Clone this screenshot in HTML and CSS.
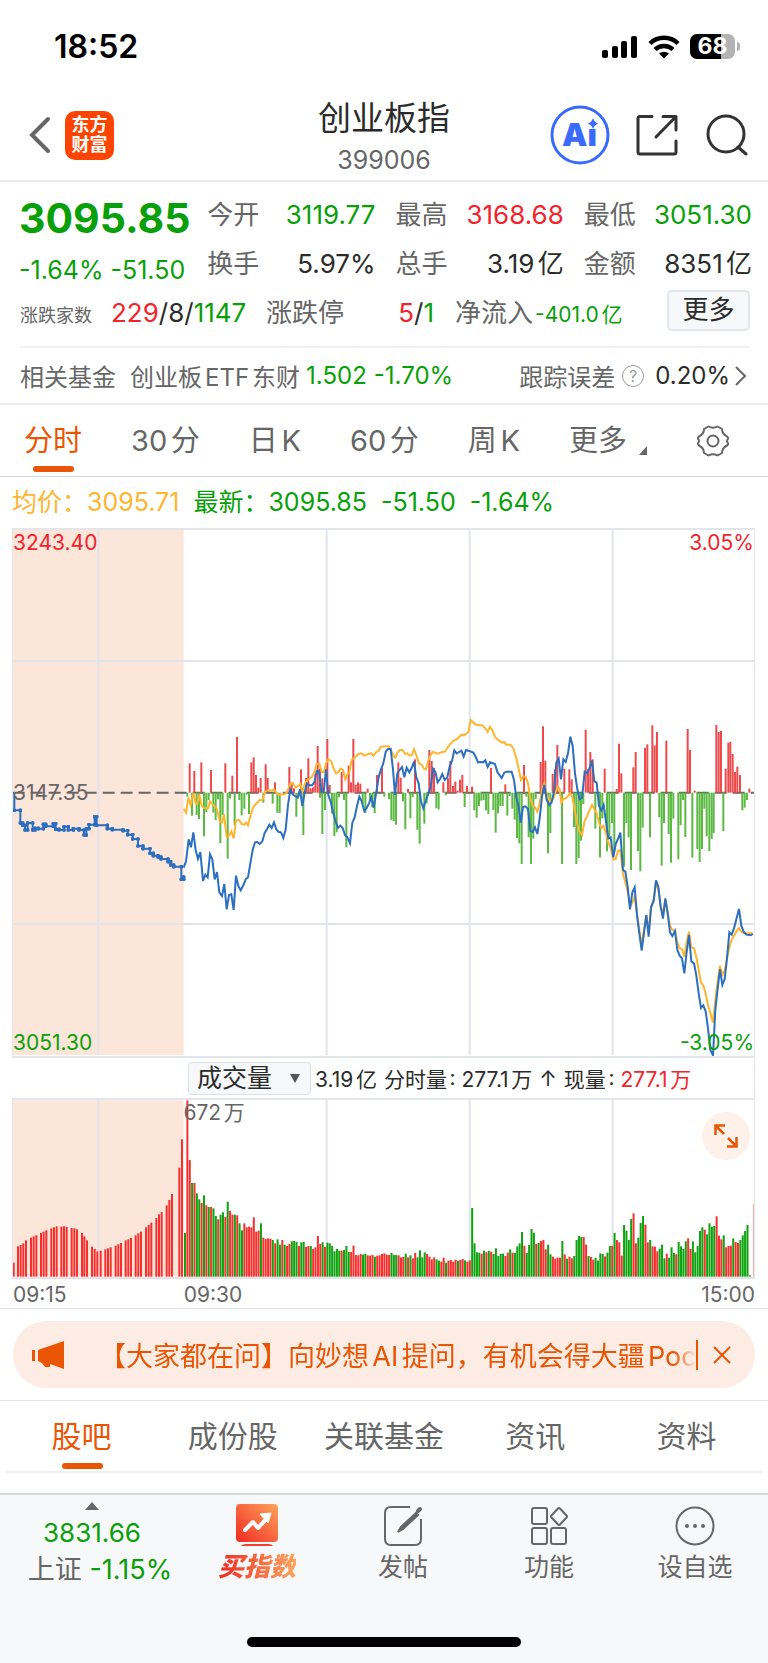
FILE: index.html
```html
<!DOCTYPE html>
<html lang="zh-CN">
<head>
<meta charset="utf-8">
<meta name="viewport" content="width=device-width, initial-scale=1">
<title>创业板指 399006</title>
<link rel="stylesheet" href="styles.css">
</head>
<body>
<div class="status">
  <span class="clock">18:52</span>
  <span class="status-icons">
    <svg width="36" height="24" viewBox="0 0 36 24"><rect x="0" y="15" width="6" height="8" rx="2"/><rect x="10" y="11" width="6" height="12" rx="2"/><rect x="19" y="6" width="6" height="17" rx="2"/><rect x="29" y="1" width="6" height="22" rx="2"/></svg>
    <svg width="32" height="24" viewBox="0 0 32 24"><g fill="none" stroke="#000" stroke-width="4.500"><path d="M2 8.500A20 20 0 0 1 30 8.500"/><path d="M7 14.500A13 13 0 0 1 25 14.500"/></g><path d="M16 23.500L11 18.600A7.500 7.500 0 0 1 21 18.600Z"/></svg>
    <span class="battery"><span>68</span></span>
  </span>
</div>

<header class="header">
  <div class="header-side">
    <button class="icon-btn back" aria-label="返回"><svg width="22" height="38" viewBox="0 0 22 38"><path d="M19 3L3 19L19 35" fill="none" stroke="#666" stroke-width="4" stroke-linecap="round"/></svg></button>
    <a class="logo" href="#"><span>东方</span><span>财富</span></a>
  </div>
  <div class="heading"><h1>创业板指</h1><p>399006</p></div>
  <div class="header-side header-actions">
    <button class="icon-btn" aria-label="智能助手"><svg width="60" height="60" viewBox="0 0 60 60"><circle cx="30" cy="30" r="28" fill="#fff" stroke="#3a6bff" stroke-width="3"/><text x="12" y="41" class="ai-text">Ai</text><path d="M36 12H48V24H36Z" fill="#fff"/><path d="M43 13Q44.500 17.500 48 18.500Q44.500 20 43 24Q41.500 20 38 18.500Q41.500 17.500 43 13Z" fill="#3a6bff"/></svg></button>
    <button class="icon-btn" aria-label="分享"><svg width="42" height="42" viewBox="0 0 42 42" fill="none" stroke="#333" stroke-width="3" stroke-linecap="round" stroke-linejoin="round"><path d="M16 2.500H4Q2 2.500 2 4.500V38Q2 40 4 40H38Q40 40 40 38V27"/><path d="M27 2.500H40V16M39 3.500L20 23"/></svg></button>
    <button class="icon-btn" aria-label="搜索"><svg width="42" height="42" viewBox="0 0 42 42" fill="none" stroke="#333" stroke-width="3" stroke-linecap="round"><circle cx="20" cy="20" r="18"/><path d="M32 33L40 40"/></svg></button>
  </div>
</header>

<main>
<section class="quote">
  <div class="quote-grid">
    <div class="price"><strong>3095.85</strong><span>-1.64% -51.50</span></div>
    <dl><dt>今开</dt><dd class="down">3119.77</dd></dl>
    <dl><dt>最高</dt><dd class="up">3168.68</dd></dl>
    <dl><dt>最低</dt><dd class="down">3051.30</dd></dl>
    <dl><dt>换手</dt><dd>5.97%</dd></dl>
    <dl><dt>总手</dt><dd>3.19亿</dd></dl>
    <dl><dt>金额</dt><dd>8351亿</dd></dl>
  </div>
  <div class="breadth">
    <span class="small-label">涨跌家数</span>
    <span class="counts"><b class="up">229</b>/8/<b class="down">1147</b></span>
    <span class="label">涨跌停</span>
    <span class="limits"><b class="up">5</b>/<b class="down">1</b></span>
    <span class="label">净流入</span><span class="inflow down">-401.0亿</span>
    <button class="more">更多</button>
  </div>
  <a class="related" href="#">
    <span>相关基金</span><span class="fund">创业板ETF东财</span><span class="down">1.502</span><span class="down fund-change">-1.70%</span>
    <span class="tracking">跟踪误差</span><span class="help">?</span><span class="dark">0.20%</span>
    <svg width="14" height="22" viewBox="0 0 14 22"><path d="M2 2L11 11L2 20" fill="none" stroke="#666" stroke-width="2"/></svg>
  </a>
</section>

<nav class="periods">
  <a class="active" href="#">分时</a><a href="#">30分</a><a href="#">日K</a><a href="#">60分</a><a href="#">周K</a>
  <a class="more-periods" href="#">更多<svg width="8" height="9" viewBox="0 0 8 9"><path d="M8 0V9H0Z" fill="#666"/></svg></a>
  <button class="icon-btn" aria-label="设置"><svg width="34" height="34" viewBox="0 0 34 34" fill="none" stroke="#666" stroke-width="2" stroke-linejoin="round"><path d="M12.500 2.500Q17 5 21.500 2.500L26 5Q26 10 31 12.500Q33 14 31.500 15.500Q30.500 17 31.500 18.500Q33 20 31 21.500Q26 24 26 29L21.500 31.500Q17 29 12.500 31.500L8 29Q8 24 3 21.500Q1 20 2.500 18.500Q3.500 17 2.500 15.500Q1 14 3 12.500Q8 10 8 5Z"/><circle cx="17" cy="17" r="5.500"/></svg></button>
</nav>

<section class="charts">
  <div class="legend"><span class="avg">均价：3095.71</span><span class="down">最新：3095.85</span><span class="down">-51.50</span><span class="down">-1.64%</span></div>

  <div class="price-chart">
    <svg class="plot" viewBox="3 6 2223 1578" preserveAspectRatio="none">
      <defs><marker id="dot" viewBox="0 0 10 10" refX="5" refY="5" markerWidth="12" markerHeight="12" markerUnits="userSpaceOnUse"><circle cx="5" cy="5" r="5" fill="#2c6fc0"/></marker></defs>
      <rect x="2" y="6" width="513" height="1575" fill="#fce5d9"/>
      <g class="grid"><path d="M0 399H2229M0 1188H2229M259 6V1581M944 6V1581M1373 6V1581M1802 6V1581"/></g>
      <path class="baseline" d="M2 794H2226"/>
      <g id="breadth-bars"></g>
      <g class="avg-line"><polyline points="515,843 522,854 529,809 536,831 544,795 551,826 556,828 562,799 569,834 579,841 589,841 594,820 602,829 614,841 624,881 630,884 636,859 644,926 651,924 658,910 665,931 672,877 682,877 689,888 697,890 702,884 708,892 716,861 724,837 732,828 743,816 751,816 760,791 769,786 779,788 786,784 794,796 804,801 819,798 826,791 834,768 842,765 851,778 859,774 865,768 871,791 879,766 886,756 899,748 907,732 914,708 922,706 929,732 936,732 942,706 949,693 957,699 964,719 972,736 979,732 986,722 993,726 1000,754 1007,738 1012,732 1019,696 1029,688 1039,678 1049,676 1057,683 1069,678 1078,676 1084,683 1092,673 1100,668 1106,657 1119,655 1130,655 1139,671 1149,691"/>
      <polyline transform="translate(1104 516)" points="45,175 52,158 60,150 68,150 75,162 82,160 88,166 95,166 102,148 110,168 117,190 125,194 132,206 138,208 145,182 152,165 159,156 173,161 187,156 195,155 203,142 212,131 221,122 230,118 245,104 252,106 260,100 266,94 272,60 280,68 288,74 307,76 315,84 323,96 330,80 337,90 345,111 352,118 365,128 372,126 379,134 392,134 400,145 409,175 416,207 423,240 430,229 437,231 444,250 451,295 458,318 465,322 472,335 479,310 486,268 493,250 500,285 510,304 520,295 527,275 534,260 539,268 544,308 550,298 560,293 571,279 577,290 584,330 592,373 599,396 606,405 614,362 621,349 628,332 636,315 643,328 650,340 657,368 664,384 671,378 678,400 685,428 692,445 700,478 707,477 714,453 721,450 729,522 736,546 743,575 750,620 757,608 764,590 771,640 778,690 785,735 792,690 799,645 806,695 813,622 821,602 828,548 835,568 842,620 849,640 856,598 863,635 870,677 877,690 885,692 892,728 899,745 906,748 913,770 920,726 927,695 934,742 942,745 949,771 956,810 963,848 970,858 977,880 984,915 991,940 999,968 1006,900 1013,845 1020,797 1027,825 1034,812 1041,775 1048,743 1055,718 1062,707 1069,695 1077,684 1084,695 1091,699 1119,700"/></g>
      <g class="price-line">
      <path transform="translate(-36 516)" marker-mid="url(#dot)" marker-end="url(#dot)" d="M43 280V331H61V369H68V376H75V390H83V369H98V390H105V385H115V386H130V373H137V379H160V371H167V388H177V390H192V380H205V390H220V386H237V390H252V405H259V386H267V374H284V350H290V376H322V386H337V389H369V392H383V404H398V417H414V438H429V446H450V460H460V467H474V471H483V477H504V485H512V495H521V500H544V538H551V531"/>
      <polyline transform="translate(-36 516)" points="551,503 558,484 566,418 573,442 580,397 587,450 594,477 601,456 609,543 616,524 623,532 630,463 637,478 644,538 651,516 658,577 666,588 673,552 680,628 687,585 694,583 701,630 708,527 715,558 722,571 730,556 737,538 744,532 752,484 758,450 765,427 772,426 779,432 787,424 794,399 801,387 808,374 815,384 822,367 829,388 836,396 843,397 850,414 857,388 864,315 871,268 878,283 885,288 893,293 900,268 907,318 914,277 921,251 929,256 936,256 943,247 950,214 957,214 964,273 971,275 978,208 985,285 992,305 999,335 1006,362 1014,384 1021,377 1028,384 1035,405 1042,412 1050,430 1057,368 1064,352 1071,318 1078,290 1085,304 1093,333 1100,324 1107,310 1114,292 1121,323 1128,282 1136,232 1143,208 1150,190 1157,156 1164,147 1172,147 1179,208 1185,285 1192,219"/>
      <polyline transform="translate(1104 516)" points="52,219 59,210 66,201 73,232 80,203 88,217 95,204 102,185 109,232 116,250 123,304 130,325 138,300 145,282 152,260 159,206 166,216 173,247 180,237 187,222 194,240 202,232 209,199 216,183 223,151 230,160 237,156 244,152 251,170 258,150 265,152 280,158 287,170 294,187 301,186 309,187 316,181 323,201 330,187 345,192 352,216 365,234 373,218 380,215 395,215 402,240 409,293 416,320 422,368 429,321 436,319 444,327 451,393 458,396 465,382 472,402 479,355 486,290 493,255 500,300 508,315 515,307 522,275 529,188 536,176 543,238 550,178 557,186 564,160 571,110 578,138 585,220 592,268 599,298 606,294 614,215 621,219 628,206 636,182 643,244 650,248 657,318 664,331 671,315 678,365 685,415 692,412 700,472 707,432 714,417 721,398 729,510 736,515 743,560 750,628 757,577 764,562 771,646 778,700 785,752 792,698 799,645 806,710 813,622 821,602 828,541 835,560 842,620 849,656 856,595 863,640 870,697 877,708 885,693 892,750 899,767 906,775 913,820 920,756 927,705 934,784 942,790 949,827 956,880 963,924 970,916 977,934 984,985 991,1050 999,1066 1006,930 1013,865 1020,808 1027,855 1034,837 1041,775 1048,697 1055,704 1062,685 1069,658 1077,627 1084,677 1091,695 1099,704 1112,706 1119,702"/></g>
    </svg>
    <div class="axis"><span class="up">3243.40</span><span class="up">3.05%</span></div>
    <span class="mid-label">3147.35</span>
    <div class="axis"><span class="down">3051.30</span><span class="down">-3.05%</span></div>
  </div>

  <div class="volume-bar">
    <label class="indicator"><select aria-label="指标"><option>成交量</option><option>成交额</option></select><svg width="10" height="9" viewBox="0 0 10 9"><path d="M0 0H10L5 9Z" fill="#555"/></svg></label>
    <span>3.19亿</span><span>分时量: 277.1万</span><span>↑</span><span>现量: <b class="up">277.1万</b></span>
  </div>

  <div class="volume-chart">
    <svg class="plot" viewBox="3 6 2223 531" preserveAspectRatio="none">
      <rect x="2" y="7" width="513" height="529" fill="#fce5d9"/>
      <g class="grid"><path d="M259 7V536M944 7V536M1373 7V536M1802 7V536"/></g>
      <g id="volume-bars"></g>
    </svg>
    <span class="volume-max">672万</span>
    <button class="expand" aria-label="全屏"><svg width="24" height="24" viewBox="0 0 24 24" fill="none" stroke="#ea5504" stroke-width="2.500"><path d="M1.500 11V1.500H11M1.500 1.500L10 10M13 22.500H22.500V13M22.500 22.500L14 14"/></svg></button>
  </div>
  <div class="times"><span>09:15</span><span>09:30</span><span class="close-time">15:00</span></div>
</section>

<section class="notice-wrap">
  <div class="notice">
    <svg width="33" height="28" viewBox="0 0 33 28" fill="#ea5504"><path d="M0 9H3V20H0ZM6 9L32 0V28L18 23V26H13L10 22L6 20Z"/></svg>
    <a href="#">【大家都在问】向妙想AI提问，有机会得大疆Poc</a>
    <button class="dismiss" aria-label="关闭"><svg width="18" height="18" viewBox="0 0 18 18"><path d="M1 1L17 17M17 1L1 17" fill="none" stroke="#ea5504" stroke-width="2"/></svg></button>
  </div>
</section>

<nav class="sections"><a class="active" href="#">股吧</a><a href="#">成份股</a><a href="#">关联基金</a><a href="#">资讯</a><a href="#">资料</a></nav>
</main>

<footer class="dock">
  <div class="dock-row">
    <a class="index-quote" href="#">
      <svg width="14" height="8" viewBox="0 0 14 8"><path d="M7 0L14 8H0Z" fill="#666"/></svg>
      <span class="down index-value">3831.66</span>
      <span class="index-change">上证 <b class="down">-1.15%</b></span>
    </a>
    <a class="buy" href="#"><svg width="42" height="42" viewBox="0 0 42 42"><defs><linearGradient id="warm" x1="0" y1="1" x2="1" y2="0"><stop offset="0" stop-color="#f02a22"/><stop offset="1" stop-color="#ffa45c"/></linearGradient></defs><rect x="0" y="0" width="42" height="38" rx="4" fill="url(#warm)"/><path d="M5 43Q5 40 10 40H32Q37 40 37 43Z" fill="#f0402c"/><path d="M9 26L17 18L22 24L31 14" fill="none" stroke="#fff" stroke-width="4" stroke-linecap="round" stroke-linejoin="round"/><path d="M24 10L35 9L32 19Z" fill="#fff" stroke="#fff" stroke-linejoin="round"/></svg><span>买指数</span></a>
    <a href="#"><svg width="42" height="42" viewBox="0 0 42 42" fill="none" stroke="#666" stroke-width="2"><path d="M28 3H9Q3 3 3 9V35Q3 41 9 41H33Q39 41 39 35V15"/><path d="M34 9L19 23L16 28L21 25L36 11Z" fill="#666"/><path d="M36 7L38 5" stroke-width="4" stroke-linecap="round"/></svg><span>发帖</span></a>
    <a href="#"><svg width="42" height="42" viewBox="0 0 42 42" fill="none" stroke="#666" stroke-width="2"><rect x="4" y="4" width="15" height="16" rx="2"/><rect x="4" y="24" width="15" height="16" rx="2"/><rect x="23" y="24" width="15" height="16" rx="2"/><path d="M30 4.500Q31 3.500 32 4.500L38.500 11.500Q39.500 12.500 38.500 13.500L32 20.500Q31 21.500 30 20.500L23.500 13.500Q22.500 12.500 23.500 11.500Z"/></svg><span>功能</span></a>
    <a href="#"><svg width="42" height="42" viewBox="0 0 42 42"><circle cx="21" cy="22" r="18.500" fill="none" stroke="#666" stroke-width="2"/><g fill="#666"><circle cx="13" cy="22" r="2"/><circle cx="21" cy="22" r="2"/><circle cx="29" cy="22" r="2"/></g></svg><span>设自选</span></a>
  </div>
  <div class="home-indicator"></div>
</footer>
<script src="charts.js"></script>
</body>
</html>
```

FILE: styles.css
```css
* { box-sizing: border-box; }
body {
  margin: 0;
  background: #fff;
  color: #2b2b2b;
  font-family: Inter, "Noto Sans CJK SC", sans-serif;
  font-size: 25px;
  text-autospace: normal;
}
a { color: inherit; text-decoration: none; }
b { font-weight: 400; }
svg { display: block; flex: none; }
h1, p, dl, dd { margin: 0; font-weight: 400; }
button, select { font: inherit; color: inherit; }
.up { color: #f4232b; }
.down { color: #08a008; }
.dark { color: #2b2b2b; }
.icon-btn { display: block; padding: 0; border: 0; background: none; }

.status {
  display: flex;
  align-items: center;
  justify-content: space-between;
  height: 90px;
  padding: 3px 33px 0 54px;
  color: #000;
}
.clock { font-size: 32px; font-weight: 600; }
.status-icons { display: flex; align-items: center; gap: 10px; }
.battery {
  position: relative;
  width: 45px;
  height: 25px;
  border-radius: 7px;
  background: linear-gradient(90deg, #000 68%, #b3b3b3 68%);
  color: #fff;
  font-size: 23px;
  font-weight: 700;
  line-height: 25px;
  text-align: center;
}
.battery::after {
  content: "";
  position: absolute;
  left: 47px;
  top: 8px;
  width: 3px;
  height: 9px;
  border-radius: 0 4px 4px 0;
  background: #b3b3b3;
}

.header {
  display: grid;
  grid-template-columns: 1fr auto 1fr;
  align-items: center;
  height: 92px;
  padding: 0 20px;
  border-bottom: 2px solid #ebebed;
}
.header-side { display: flex; align-items: center; gap: 14px; }
.back { padding-left: 9px; }
.header-actions { justify-content: flex-end; gap: 28px; }
.header-actions .icon-btn:first-child { margin-right: -2px; }
.logo {
  display: flex;
  flex-direction: column;
  justify-content: center;
  width: 49px;
  height: 49px;
  border-radius: 10px;
  background: #ff4400;
  color: #fff;
  font-size: 18px;
  font-weight: 700;
  line-height: 20px;
  text-align: center;
}
.heading { padding-top: 6px; text-align: center; }
.heading h1 { font-size: 33px; line-height: 44px; }
.heading p { color: #666; font-size: 25px; line-height: 40px; }
.ai-text { fill: #3a6bff; font-size: 32px; font-weight: 900; }

.quote { border-bottom: 2px solid #ebebed; padding-top: 8px; }
.quote-grid {
  display: grid;
  grid-template-columns: repeat(4, minmax(0, 1fr));
  grid-auto-rows: 49px;
  column-gap: 20px;
  padding: 0 16px 0 19px;
}
.price { grid-row: span 2; color: #08a008; white-space: nowrap; }
.price strong { display: block; font-size: 41px; font-weight: 700; line-height: 56px; }
.price span { display: block; line-height: 48px; }
.quote dl { display: flex; justify-content: space-between; line-height: 49px; white-space: nowrap; }
.quote dt, .label { color: #666; font-size: 26px; }
.quote dd { font-size: 26px; }
.breadth {
  display: flex;
  align-items: center;
  height: 60px;
  margin: 0 18px 0 20px;
  padding-bottom: 9px;
  border-bottom: 2px solid #f0f0f2;
  line-height: 49px;
  white-space: nowrap;
}
.small-label { width: 91px; padding-top: 6px; color: #666; font-size: 18px; }
.counts { width: 155px; font-size: 26px; }
.limits { width: 90px; font-size: 26px; text-align: right; margin-right: 21px; }
.inflow { padding: 4px 0 0 2px; font-size: 21px; }
.more {
  width: 83px;
  height: 41px;
  margin: -5px 0 0 auto;
  padding: 0;
  border: 2px solid #e2e5ec;
  border-radius: 5px;
  background: #f7f8fa;
  font-size: 26px;
  line-height: 36px;
}
.related {
  display: flex;
  align-items: center;
  height: 55px;
  padding: 0 20px;
  color: #666;
  font-size: 24px;
  white-space: nowrap;
}
.fund { margin: 0 6px 0 14px; }
.fund-change { margin-left: 7px; }
.tracking { margin-left: auto; }
.help {
  width: 22px;
  height: 22px;
  margin: 0 11px 0 7px;
  border: 1px solid #999;
  border-radius: 50%;
  color: #999;
  font-size: 16px;
  line-height: 20px;
  text-align: center;
}
.related svg { margin-left: 4px; }

.periods {
  display: flex;
  align-items: center;
  justify-content: space-between;
  height: 72px;
  padding: 0 38px 0 24px;
  border-bottom: 1px solid #d3d7de;
  color: #666;
  font-size: 29px;
  line-height: 69px;
}
.periods a, .sections a { position: relative; }
.active { color: #ea5504; }
.active::after {
  content: "";
  position: absolute;
  left: calc(50% - 20px);
  bottom: 3px;
  width: 41px;
  height: 6px;
  border-radius: 3px;
  background: #ea5504;
}
.more-periods { display: flex; align-items: flex-end; gap: 12px; }
.more-periods svg { margin-bottom: 20px; }

.legend { display: flex; gap: 14px; padding-left: 12px; line-height: 51px; }
.legend .avg { color: #ffb52e; }
.price-chart {
  position: relative;
  display: flex;
  flex-direction: column;
  justify-content: space-between;
  height: 530px;
  margin: 0 13px 0 12px;
  border: 2px solid #e2e5ec;
  border-width: 2px 1px;
  font-size: 21px;
  line-height: 26px;
}
.plot { position: absolute; inset: 0; width: 100%; height: 100%; }
.grid path { fill: none; stroke: #e2e4ec; stroke-width: 2px; vector-effect: non-scaling-stroke; }
.baseline { stroke: #666; stroke-width: 2px; stroke-dasharray: 12 6; vector-effect: non-scaling-stroke; }
.avg-line, .price-line { fill: none; stroke-linejoin: miter; }
.avg-line { stroke: #ffb52e; }
.price-line { stroke: #2c6fc0; }
.avg-line *, .price-line * { stroke-width: 2px; vector-effect: non-scaling-stroke; }
.bar-up { fill: #ee4a4c; }
.bar-down { fill: #5cba42; }
.vol-up { fill: #f7302f; }
.vol-down { fill: #0ea30e; }
.axis { position: relative; display: flex; justify-content: space-between; }
.mid-label { position: relative; color: #666; }

.volume-bar {
  display: flex;
  align-items: center;
  gap: 7px;
  height: 40px;
  margin: 0 13px 0 12px;
  padding-left: 176px;
  border-right: 1px solid #e2e5ec;
  font-size: 21px;
  white-space: nowrap;
}
.indicator { position: relative; margin-right: -3px; }
.indicator select {
  display: block;
  width: 123px;
  height: 33px;
  padding: 0 8px;
  border: 1px solid #dcdfe6;
  border-radius: 4px;
  background: #f7f8fa;
  font-size: 25px;
  line-height: 30px;
  appearance: none;
}
.indicator svg { position: absolute; right: 11px; top: 12px; pointer-events: none; }
.volume-chart {
  position: relative;
  height: 181px;
  margin: 0 13px 0 12px;
  border: 1px solid #e2e5ec;
  border-width: 2px 1px;
  font-size: 21px;
}
.volume-max { position: absolute; left: 23%; top: 0; line-height: 26px; color: #666; }
.expand {
  position: absolute;
  right: 4px;
  top: 12px;
  display: grid;
  place-items: center;
  width: 48px;
  height: 48px;
  padding: 0;
  border: 0;
  border-radius: 50%;
  background: #fef1ea;
}
.times {
  display: grid;
  grid-template-columns: 23% 1fr auto;
  padding: 2px 13px 0;
  border-bottom: 1px solid #dfe2e8;
  color: #666;
  font-size: 21px;
  line-height: 27px;
}

.notice-wrap { padding: 12px 13px; border-bottom: 1px solid #dfe2e8; }
.notice {
  display: flex;
  align-items: center;
  height: 67px;
  padding: 0 24px 0 19px;
  border-radius: 34px;
  background: #fcece4;
  color: #ea5504;
  font-size: 27px;
}
.notice a {
  flex: 1;
  min-width: 0;
  margin-left: 34px;
  overflow: hidden;
  white-space: nowrap;
  mask-image: linear-gradient(90deg, #000 calc(100% - 22px), transparent);
}
.dismiss { height: 30px; padding: 0 0 0 15px; border: 0; border-left: 2px solid #ea5504; background: none; }

.sections {
  display: grid;
  grid-template-columns: repeat(5, 1fr);
  height: 72px;
  margin: 0 6px 20px;
  border-bottom: 2px solid #f0f0f2;
  color: #666;
  font-size: 30px;
  line-height: 71px;
  text-align: center;
}

.dock { padding-bottom: 17px; border-top: 2px solid #d8dbe0; background: #f7f8fa; color: #666; }
.dock-row { display: grid; grid-template-columns: 184px repeat(4, 1fr); height: 142px; }
.dock-row > a { display: flex; flex-direction: column; align-items: center; padding-top: 9px; line-height: 42px; }
.dock-row .index-quote { padding: 7px 0 0; white-space: nowrap; }
.index-quote { font-size: 26px; }
.dock-row .index-value { line-height: 46px; }
.index-change { padding-left: 16px; line-height: 28px; font-size: 27px; }
.buy span {
  background: linear-gradient(90deg, #f02a22, #ffa45c);
  background-clip: text;
  color: transparent;
  font-size: 26px;
  font-style: italic;
  font-weight: 900;
}
.home-indicator { width: 274px; height: 10px; margin: 0 auto; border-radius: 5px; background: #000; }
```

FILE: charts.js
```js
const SVG = "http://www.w3.org/2000/svg";

function addBar(group, x, top, height, cls) {
  const rect = document.createElementNS(SVG, "rect");
  rect.setAttribute("x", x - 3);
  rect.setAttribute("y", top);
  rect.setAttribute("width", 6);
  rect.setAttribute("height", height);
  rect.setAttribute("class", cls);
  group.appendChild(rect);
}

// Strength bars: "x:y" pairs, above or below the previous close.
const ZERO = 278;
const strength = [
  [-36, "569:190 583:213 604:187 633:210 676:190 697:227 711:111 754:187 761:172 768:225 775:263 782:234 797:193 803:234 825:247 868:201 875:247 882:265 903:208 918:234 925:175 932:265 939:262 946:222 953:138 960:206 967:235 982:117 989:255 1025:216 1046:197 1053:247 1060:117 1067:254 1074:247 1081:251 1103:266 1131:225 1146:204 1195:187 562:290 576:347 590:345 597:357 612:409 619:336 626:300 640:338 647:360 654:298 661:429 668:345 683:476 690:295 704:375 718:300 725:346 733:326 740:284 747:342 790:308 818:311 832:338 839:339 889:350 896:292 910:405 960:293 967:402 975:330 996:340 1003:408 1010:397 1017:292 1032:300 1039:442 1088:312 1096:339 1110:300 1117:322 1124:339 1153:290 1167:297 1174:360 1181:363 1188:374"],
  [1104, "62:233 84:267 105:178 148:150 155:183 162:204 190:247 204:235 211:183 219:258 226:245 233:272 240:239 247:225 261:258 276:260 333:204 376:253 432:195 482:186 489:79 496:182 518:222 525:208 532:135 553:206 568:208 575:238 617:89 624:208 631:156 638:178 674:206 710:267 717:131 724:220 760:202 767:156 795:144 802:133 817:76 824:136 831:96 859:122 923:87 930:150 944:272 1009:75 1016:96 1023:93 1037:206 1045:128 1051:126 1058:162 1065:216 1072:200 1080:225 1108:266 69:304 76:388 91:355 98:292 112:389 119:431 133:371 140:310 169:325 176:328 197:286 254:321 283:331 290:353 297:318 304:302 311:300 318:331 325:342 340:330 347:398 354:340 361:318 368:318 382:347 389:288 397:326 404:359 411:414 418:430 425:492 439:290 446:412 453:492 460:416 467:297 504:460 511:399 546:492 582:381 589:492 596:474 603:422 610:312 646:386 660:472 667:355 681:454 688:410 696:369 703:453 732:500 739:369 746:412 753:510 774:453 781:514 788:383 810:412 838:352 845:497 852:369 866:402 873:488 880:356 895:478 902:375 909:300 916:411 937:473 952:447 959:486 966:447 973:326 980:409 988:453 995:417 1001:399 1030:393 1087:331 1094:323 1101:300"]
];
const breadth = document.getElementById("breadth-bars");
for (const [shift, pairs] of strength) {
  for (const pair of pairs.split(" ")) {
    const [x, y] = pair.split(":").map(Number);
    addBar(breadth, x + shift, Math.min(y, ZERO) + 516, Math.abs(y - ZERO), y < ZERO ? "bar-up" : "bar-down");
  }
}

const volume = document.getElementById("volume-bars");
const FLOOR = 680;
function addVolume(x, y, cls) {
  addBar(volume, x, y - 144, FLOOR - y, cls);
}

// Call auction, 09:15 to 09:25.
const auction = "41:638 54:589 62:585 70:580 78:571 93:563 101:559 109:556 123:549 131:545 139:541 154:535 162:532 170:529 184:530 192:529 200:531 215:534 223:535 231:538 246:549 253:559 261:571 276:590 284:597 292:604 302:602 316:598 324:595 332:592 347:587 355:583 363:579 377:571 385:568 393:564 407:556 415:550 423:545 438:532 446:525 454:518 469:504 477:493 485:486 500:466 508:450 516:432 538:353 546:268";
for (const pair of auction.split(" ")) {
  const [x, y] = pair.split(":").map(Number);
  addVolume(x - 36, y, "vol-up");
}

// One entry per minute; g = falling, r = rising.
const MINUTE = 7.12;
const morning = "g549 r151 r330 g399 r399 g430 g448 r459 g436 r466 g471 r471 g475 g498 r508 g494 g487 r501 g455 r483 r494 g494 r496 g520 g541 r520 r532 r530 r532 r502 r545 r542 g520 r563 r567 r565 r566 g570 r580 g568 g584 r570 g584 r588 r582 g574 g573 g576 r588 g577 g576 r591 r588 g588 r597 r592 r558 r582 g577 r591 g578 g580 g588 g604 g597 g602 r602 g600 g588 g606 r606 r587 r615 r616 r612 g614 g611 r616 r617 r615 g620 r617 r616 r612 r610 r614 r615 g609 g615 g615 r616";
const rest = "r622 r621 g611 r622 g616 r625 r609 g622 g601 g622 g607 r612 r620 r628 r622 g628 g632 r635 r623 g638 r632 r630 r635 r629 g632 r630 r627 g631 r635 r631 g474 g580 g607 g608 r611 g602 r607 g603 r605 g612 g595 g618 g612 g611 r618 r608 g598 r608 g609 g589 g580 g546 r587 g609 g585 g537 g548 r582 g579 r573 r570 r598 g584 g613 r620 r626 r623 r623 g573 r613 g626 r620 r625 g618 g570 g558 g561 r561 r584 g618 r621 r629 g624 g632 g610 g612 r619 g608 g588 r588 g549 r570 r577 r617 g525 g542 g570 g507 r490 r580 g563 g519 g498 r524 r577 g570 r589 r590 r604 g596 g584 g625 r611 g623 g592 g609 r613 g576 g589 g597 g574 r565 r597 g574 g607 g588 g543 g532 r539 g553 g520 g530 g528 r499 r557 r568 g556 r592 r588 r587 g565 r576 r579 g570 g556 g543 g525 g676 g680 r462";
(morning + " " + rest).split(" ").forEach((entry, i) => {
  addVolume(519 + i * MINUTE, Number(entry.slice(1)), entry[0] === "r" ? "vol-up" : "vol-down");
});
```
